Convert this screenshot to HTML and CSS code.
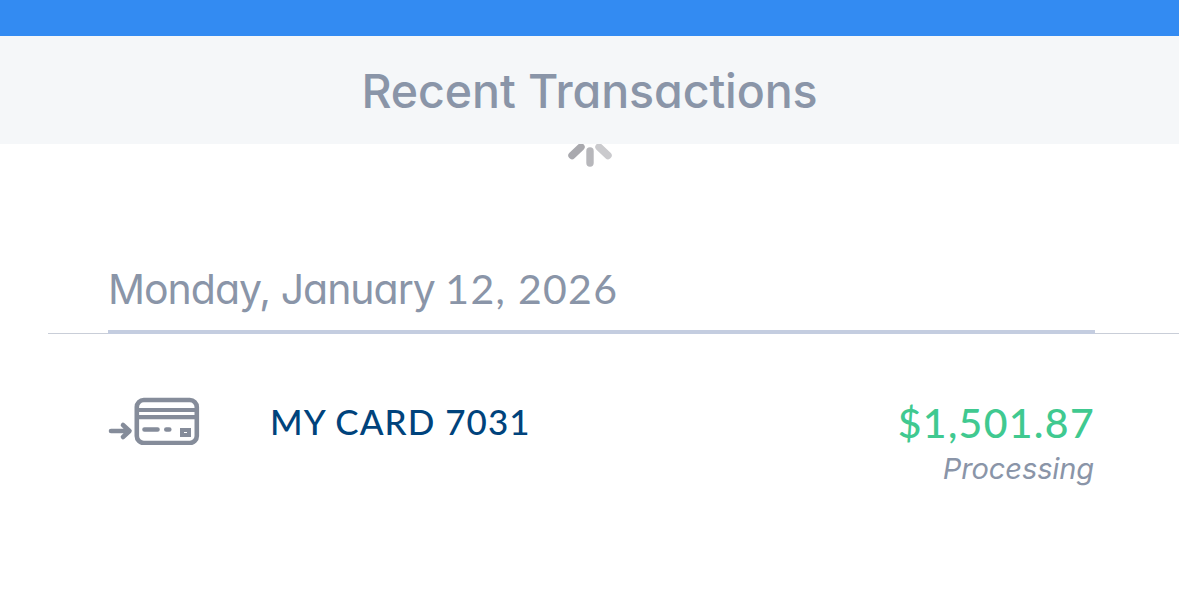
FILE: index.html
```html
<!DOCTYPE html>
<html lang="en">
<head>
    <meta charset="utf-8">
    <title>Recent Transactions</title>
    <link rel="stylesheet" href="styles.css">
</head>
<body>
    <div class="top-bar"></div>
    <header class="section-header">
        <h1>Recent Transactions</h1>
    </header>

    <main>
        <div class="loader">
            <svg width="46" height="26" viewBox="0 0 46 26" fill="none" stroke-width="7.4" stroke-linecap="round">
                <path d="M14 3 L5 11.5" stroke="#a9a9ae"/>
                <path d="M23 7 V19" stroke="#b7b7bb"/>
                <path d="M32 3 L41 11.5" stroke="#cacacd"/>
            </svg>
        </div>

        <div class="date-group">
            <h2><span class="month">Monday, January</span> <span class="day">12, 2026</span></h2>
        </div>

        <div class="transaction">
            <svg class="card-icon" width="92" height="50" viewBox="0 0 92 50" fill="none" stroke="#858c9a" stroke-width="4.6" stroke-linecap="round" stroke-linejoin="round">
                <path d="M3 36 H21 M15 30 L21.5 36 L15 42"/>
                <rect x="28.8" y="5" width="60" height="43" rx="7"/>
                <path d="M29 15 H89 M29 22.2 H89" stroke-linecap="butt" stroke-width="4.2"/>
                <path d="M36.5 34.5 H49.5 M58.3 34.5 H61.3"/>
                <rect x="74" y="35" width="7" height="5" stroke-width="4" stroke-linejoin="miter"/>
            </svg>
            <span class="name">MY CARD 7031</span>
            <div class="amount">
                <span class="value">$1,501.87</span>
                <span class="status">Processing</span>
            </div>
        </div>
    </main>
</body>
</html>
```

FILE: styles.css
```css
body {
    margin: 0;
    background-color: #fff;
    color: #8a95a8;
    font-family: Lato, sans-serif;
    overflow: hidden;
}
h1, h2 {
    margin: 0;
    white-space: nowrap;
}
.top-bar {
    height: 36px;
    background-color: #338bf2;
}
.section-header {
    height: 108px;
    display: flex;
    justify-content: center;
    background-color: #f5f7f9;
}
.section-header h1 {
    font: 500 46.5px/110px Inter, sans-serif;
    font-feature-settings: "cv11";
    letter-spacing: -0.1px;
}
.loader {
    height: 26px;
    display: flex;
    justify-content: center;
    padding-left: 1px;
}
.loader svg {
    display: block;
}
.date-group {
    height: 163px;
    margin-left: 48px;
    padding-left: 60px;
    padding-right: 84px;
    border-bottom: 1px solid #c9ced8;
}
.date-group h2 {
    height: 164px;
    box-sizing: border-box;
    padding-top: 89px;
    border-bottom: 4px solid #c4cde0;
    font-size: 41px;
    line-height: 60px;
    font-weight: 400;
}
.month {
    font-family: Inter, sans-serif;
    font-weight: 400;
    font-feature-settings: "cv11";
    letter-spacing: -1px;
}
.day {
    letter-spacing: 1.3px;
}
.transaction {
    display: flex;
    padding: 61px 85px 0 108px;
}
.card-icon {
    flex: none;
}
.name {
    margin-left: 70px;
    padding-top: 1px;
    color: #00437c;
    font-size: 35px;
    font-weight: 500;
    line-height: 50px;
    letter-spacing: 1.05px;
}
.amount {
    display: flex;
    flex-direction: column;
    align-items: flex-end;
    margin-left: auto;
}
.value {
    margin-right: -1px;
    color: #40c990;
    font-size: 41px;
    font-weight: 500;
    line-height: 55px;
    letter-spacing: 1.3px;
}
.status {
    font-family: Inter, sans-serif;
    font-size: 29px;
    font-style: italic;
    font-weight: 400;
    line-height: 37px;
    letter-spacing: -0.1px;
}
```
